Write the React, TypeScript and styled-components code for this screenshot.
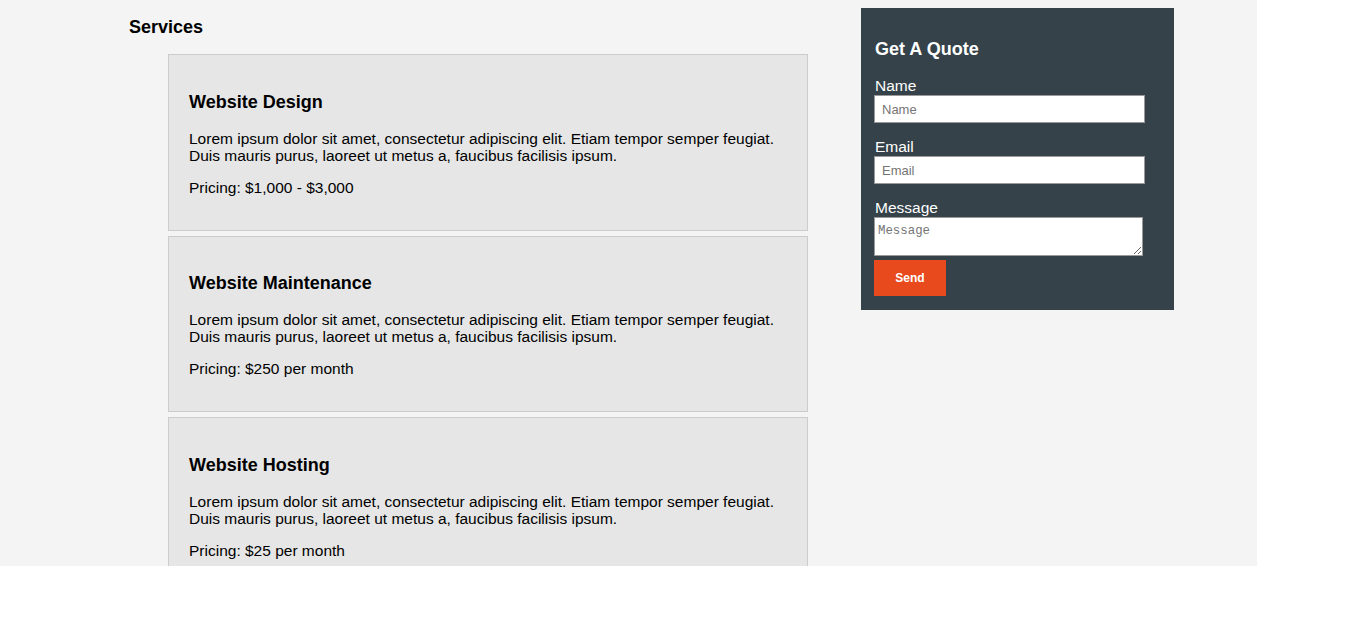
import React from "react";
import styled, { createGlobalStyle } from "styled-components";

const Global = createGlobalStyle`
  html, body { margin: 0; padding: 0; background: #ffffff; }
  body { font-family: "Liberation Sans", Arial, sans-serif; color: #000; }
  * { box-sizing: border-box; }
`;

const Page = styled.div`
  width: 1257px;
  height: 566px;
  overflow: hidden;
  background: #f4f4f4;
  display: flex;
  align-items: flex-start;
  padding-left: 129px;
`;

const MainCol = styled.section`
  width: 679px;
  flex: none;
`;

const PageTitle = styled.h1`
  margin: 17px 0 16px;
  font-size: 18px;
  line-height: 21px;
  font-weight: bold;
`;

const ServiceList = styled.ul`
  list-style: none;
  margin: 0 0 0 39px;
  padding: 0;
  display: flex;
  flex-direction: column;
  gap: 5px;
`;

const ServiceCard = styled.li`
  background: #e6e6e6;
  border: 1px solid #cccccc;
  padding: 18.5px 20px 18px;
  height: 176.5px;
`;

const ServiceTitle = styled.h3`
  margin: 18px 0 17px;
  font-size: 18px;
  line-height: 21px;
  font-weight: bold;
`;

const Text = styled.p`
  margin: 0 0 15px;
  font-size: 15.5px;
  line-height: 17px;
`;

const Sidebar = styled.aside`
  margin-top: 8px;
  margin-left: 53px;
  width: 313px;
  flex: none;
  background: #35424a;
  color: #ffffff;
  padding: 12px 13px 14px;
`;

const QuoteTitle = styled.h3`
  margin: 19px 0 17px 1px;
  font-size: 18px;
  line-height: 21px;
  font-weight: bold;
`;

const Form = styled.form`
  display: flex;
  flex-direction: column;
  align-items: flex-start;
`;

const Field = styled.div<{ $last?: boolean }>`
  display: flex;
  flex-direction: column;
  margin-bottom: ${(p) => (p.$last ? "4px" : "15px")};
`;

const Label = styled.label`
  font-size: 15.5px;
  line-height: 18px;
  padding-left: 1px;
`;

const Input = styled.input`
  width: 271px;
  height: 28px;
  border: 1px solid #9a9a9a;
  background: #fff;
  padding: 0 7px;
  font-family: "Liberation Sans", Arial, sans-serif;
  font-size: 13px;
  outline: none;
  &::placeholder { color: #757575; }
`;

const TextArea = styled.textarea`
  width: 269px;
  height: 39px;
  border: 1px solid #9a9a9a;
  background: #fff;
  padding: 6px 3px 2px;
  font-family: "Liberation Mono", "DejaVu Sans Mono", monospace;
  font-size: 12.4px;
  line-height: 14px;
  display: block;
  resize: vertical;
  outline: none;
  &::placeholder { color: #757575; }
`;

const SendButton = styled.button`
  width: 72px;
  height: 36px;
  background: #e8491d;
  border: 0;
  color: #fff;
  font-family: "Liberation Sans", Arial, sans-serif;
  font-weight: bold;
  font-size: 12px;
  padding: 0;
  cursor: pointer;
`;

const services = [
  { title: "Website Design", price: "Pricing: $1,000 - $3,000" },
  { title: "Website Maintenance", price: "Pricing: $250 per month" },
  { title: "Website Hosting", price: "Pricing: $25 per month" },
];

const lorem =
  "Lorem ipsum dolor sit amet, consectetur adipiscing elit. Etiam tempor semper feugiat. Duis mauris purus, laoreet ut metus a, faucibus facilisis ipsum.";

export default function App() {
  return (
    <>
      <Global />
      <Page>
        <MainCol>
          <PageTitle>Services</PageTitle>
          <ServiceList>
            {services.map((s) => (
              <ServiceCard key={s.title}>
                <ServiceTitle>{s.title}</ServiceTitle>
                <Text>{lorem}</Text>
                <Text>{s.price}</Text>
              </ServiceCard>
            ))}
          </ServiceList>
        </MainCol>
        <Sidebar>
          <QuoteTitle>Get A Quote</QuoteTitle>
          <Form onSubmit={(e) => e.preventDefault()}>
            <Field>
              <Label>Name</Label>
              <Input type="text" placeholder="Name" />
            </Field>
            <Field>
              <Label>Email</Label>
              <Input type="email" placeholder="Email" />
            </Field>
            <Field $last>
              <Label>Message</Label>
              <TextArea placeholder="Message" />
            </Field>
            <SendButton type="submit">Send</SendButton>
          </Form>
        </Sidebar>
      </Page>
    </>
  );
}
